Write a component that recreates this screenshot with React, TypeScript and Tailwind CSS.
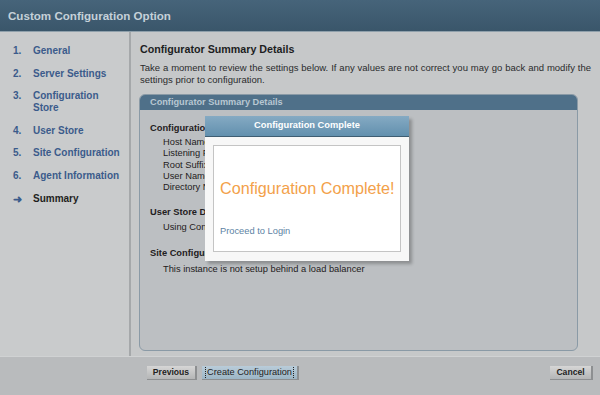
import React from "react";

const font = { fontFamily: '"Liberation Sans", Arial, Helvetica, sans-serif' };

function SideItem({ num, label, active }: { num: React.ReactNode; label: React.ReactNode; active?: boolean }) {
  return (
    <div className={`flex text-[10px] font-bold leading-[12px] ${active ? "text-[#1e1f20]" : "text-[#3b5b8b]"}`}>
      <div className="w-[20px] shrink-0 text-[#3b5b8b]">{num}</div>
      <div>{label}</div>
    </div>
  );
}

function Btn({ children, primary, w }: { children: React.ReactNode; primary?: boolean; w: string }) {
  return (
    <div
      className={`${w} h-[14px] flex items-center justify-center text-[8.6px] font-bold leading-none text-[#222] whitespace-nowrap border-r-2 border-b border-[#8d8f91] ${
        primary ? "bg-gradient-to-b from-[#b9ccd9] to-[#9db6c6]" : "bg-gradient-to-b from-[#d6d6d6] to-[#b4b5b6]"
      }`}
    >
      {primary ? (
        <span className="border-x border-dotted border-[#222] px-[1px] py-[1px] text-[9.2px] font-normal">{children}</span>
      ) : (
        children
      )}
    </div>
  );
}

export default function App() {
  return (
    <div style={font} className="relative w-[600px] h-[395px] overflow-hidden bg-[#c6c8c9] flex flex-col">
      <div className="h-[32px] shrink-0 bg-gradient-to-b from-[#46647a] to-[#3a566a] border-b border-[#8fa0ab] flex items-center pl-[8px]">
        <span className="text-[11.6px] font-bold text-[#c5d1d9]">Custom Configuration Option</span>
      </div>
      <div className="flex flex-1">
        <div className="w-[131px] shrink-0 bg-[#c9cbcc] border-r-2 border-[#a5a8aa] pt-[13px] pl-[13px] flex flex-col gap-[10.6px]">
          <SideItem num="1." label="General" />
          <SideItem num="2." label="Server Settings" />
          <SideItem num="3." label={<>Configuration<br />Store</>} />
          <SideItem num="4." label="User Store" />
          <SideItem num="5." label="Site Configuration" />
          <SideItem num="6." label="Agent Information" />
          <SideItem num={<span className="text-[11px]">➜</span>} label="Summary" active />
        </div>
        <div className="flex-1 pl-[8px] pt-[10px] pb-[5px] flex flex-col">
          <div className="pl-[1px] text-[10.7px] font-bold text-[#1d1e1f] leading-[14px]">Configurator Summary Details</div>
          <p className="pl-[1px] mt-[6px] w-[452px] text-[9.5px] leading-[12px] text-[#2a2b2c] text-justify">
            Take a moment to review the settings below. If any values are not correct you may go back and modify the settings prior to configuration.
          </p>
          <div className="mt-[8px] w-[439px] flex-1 rounded-[6px] border border-[#8a9aa6] bg-[#bcbfc2] overflow-hidden flex flex-col">
            <div className="h-[15px] bg-[#4f7089] flex items-center pl-[10px] text-[9.2px] font-bold text-[#b8c7d2]">
              Configurator Summary Details
            </div>
            <div className="pl-[10px] pt-[12px] text-[9.3px] text-[#1f2021]">
              <div className="font-bold leading-[12px]">Configuration</div>
              <div className="pl-[13px] mt-[3px] leading-[11.3px]">
                <div>Host Name</div>
                <div>Listening Port</div>
                <div>Root Suffix</div>
                <div>User Name</div>
                <div>Directory Name</div>
              </div>
              <div className="font-bold leading-[12px] mt-[13px]">User Store Details</div>
              <div className="pl-[13px] mt-[3px] leading-[12px]">Using Configuration Store</div>
              <div className="font-bold leading-[12px] mt-[14px]">Site Configuration</div>
              <div className="pl-[13px] mt-[4px] leading-[12px]">This instance is not setup behind a load balancer</div>
            </div>
          </div>
        </div>
      </div>
      <div className="h-[39px] shrink-0 bg-[#b9bbbd] border-t border-[#d0d2d3] flex items-start pt-[9px]">
        <div className="pl-[147px] flex gap-[5px]">
          <Btn w="w-[50px]">Previous</Btn>
          <Btn w="w-[97px]" primary>Create Configuration</Btn>
        </div>
        <div className="ml-auto mr-[7px]">
          <Btn w="w-[43px]">Cancel</Btn>
        </div>
      </div>

      <div className="absolute left-[205px] top-[116px] w-[204px] h-[145px] bg-[#f7f7f7] shadow-[3px_3px_3px_rgba(0,0,0,0.25)] flex flex-col">
        <div className="h-[21px] bg-gradient-to-b from-[#85aac3] to-[#6290ae] border-b border-[#3e5d72] flex items-center justify-center text-[9.3px] font-bold text-white">
          Configuration Complete
        </div>
        <div className="mx-[8px] mt-[8px] h-[107px] bg-white border border-[#c4c4c4] pl-[6px] flex flex-col">
          <div className="mt-[32px] text-[16.2px] text-[#f3a14a] leading-[20px] whitespace-nowrap">Configuration Complete!</div>
          <div className="mt-[27px] text-[9.3px] leading-[12px] text-[#5d83a4]">Proceed to Login</div>
        </div>
      </div>
    </div>
  );
}
